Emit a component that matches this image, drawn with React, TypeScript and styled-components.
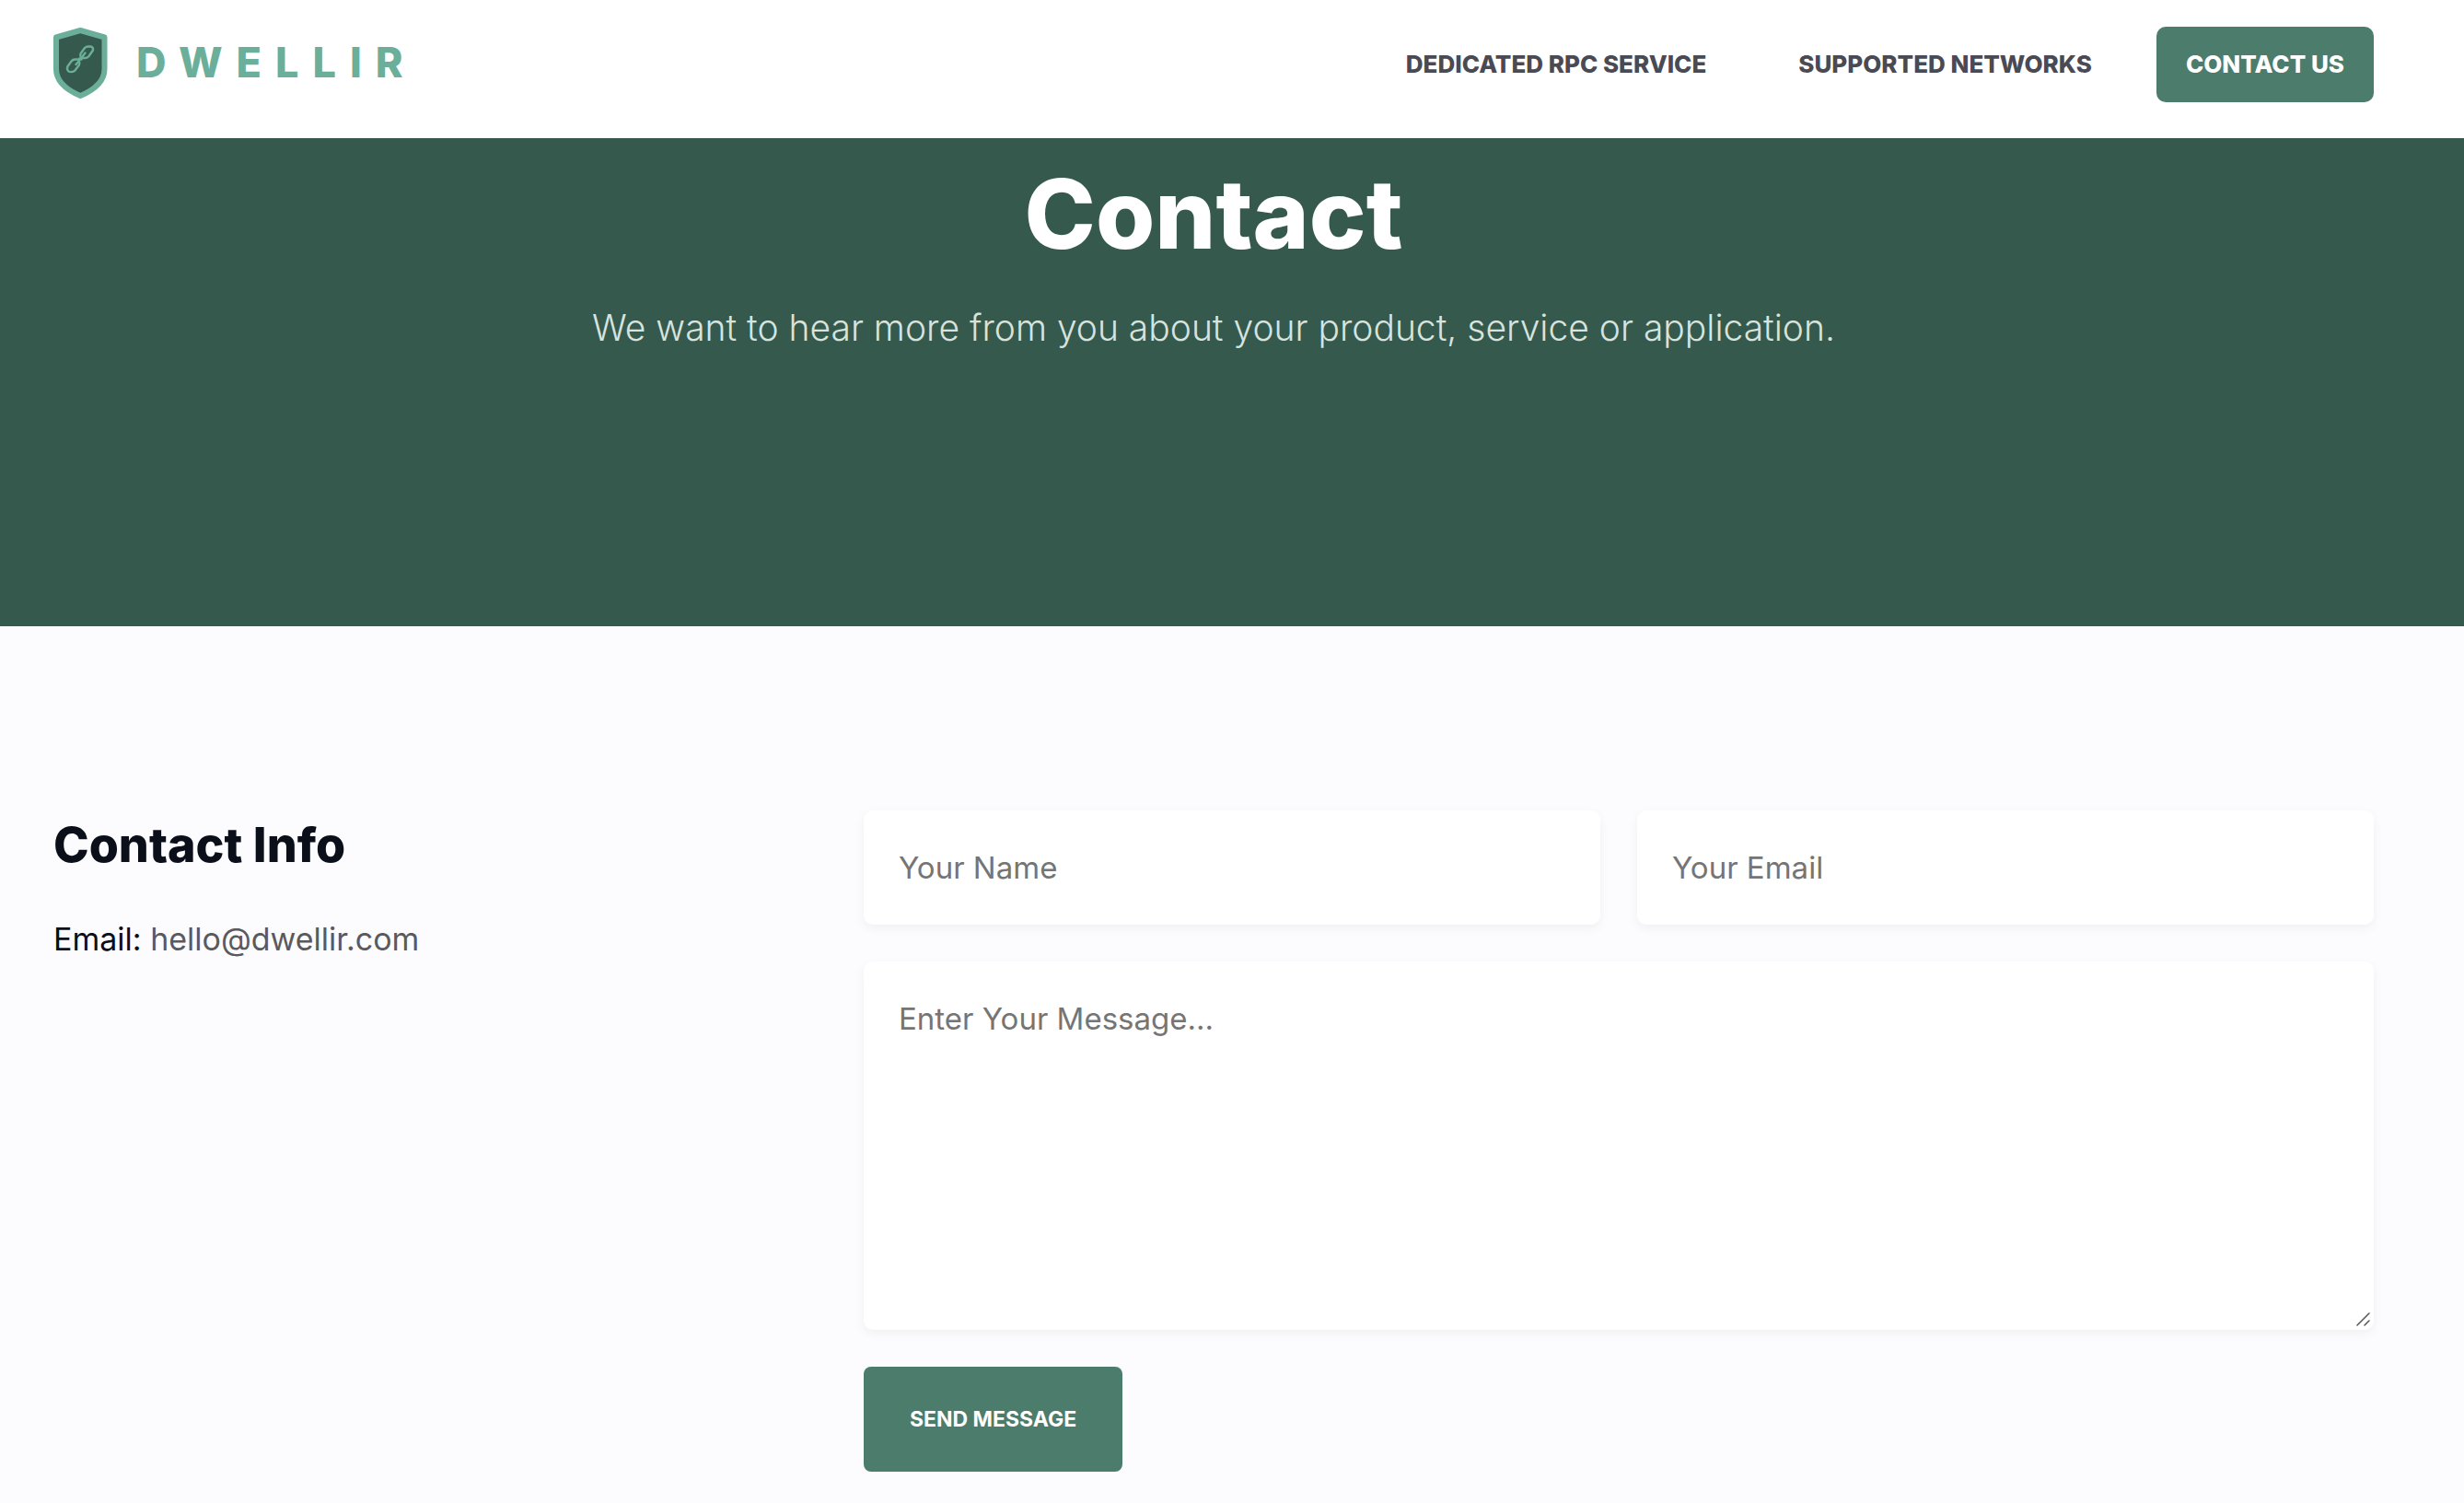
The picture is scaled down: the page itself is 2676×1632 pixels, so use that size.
import React from "react";
import styled, { createGlobalStyle } from "styled-components";

const GlobalStyle = createGlobalStyle`
  *, *::before, *::after { box-sizing: border-box; }
  body {
    margin: 0;
    background: #fcfcfe;
    color: #0b0f1a;
    font-family: Inter, "Open Sans", sans-serif;
    -webkit-font-smoothing: antialiased;
  }
`;

const Header = styled.header`
  display: flex;
  justify-content: space-between;
  align-items: flex-start;
  min-height: 150px;
  padding: 29px 98px 38px 58px;
  background: #fff;
`;

const Brand = styled.a`
  display: flex;
  align-items: flex-start;
  gap: 30px;
  color: #6baf9a;
  text-decoration: none;
`;

const Shield = styled.svg`
  width: 60px;
  height: 80px;
`;

const Wordmark = styled.span`
  font-size: 45px;
  font-weight: 800;
  line-height: 78px;
  letter-spacing: 15px;
`;

const Nav = styled.nav`
  display: flex;
  align-items: center;
  gap: 100px;
`;

const NavLink = styled.a`
  color: #4a4a55;
  font-size: 26px;
  font-weight: 800;
  line-height: 82px;
  text-decoration: none;
`;

const NavButton = styled(NavLink)`
  margin-left: -30px;
  padding: 0 32px;
  border-radius: 10px;
  background: #4c7c6b;
  color: #fff;
`;

const Hero = styled.section`
  padding: 22px 98px 294px 58px;
  background: #35594c;
  text-align: center;
`;

const HeroTitle = styled.h1`
  margin: 0;
  color: #fff;
  font-size: 104px;
  font-weight: 800;
  line-height: 120px;
`;

const HeroText = styled.p`
  margin: 34px 0 0;
  color: #d7e3de;
  font-size: 39px;
  font-weight: 300;
  line-height: 60px;
`;

const Main = styled.main`
  display: flex;
  padding: 200px 98px 34px 58px;
`;

const Info = styled.section`
  flex: 0 0 calc(100% / 3);
`;

const InfoTitle = styled.h2`
  margin: 0 0 38px;
  font-size: 52px;
  font-weight: 800;
  line-height: 76px;
`;

const InfoLine = styled.p`
  margin: 0;
  font-size: 34px;
  line-height: 52px;
`;

const MailLink = styled.a`
  color: #5a5a5e;
  text-decoration: none;
`;

const Form = styled.form`
  display: grid;
  flex: 1;
  grid-template-columns: 1fr 1fr;
  gap: 40px;
  padding-left: 40px;
`;

const Field = styled.input`
  width: 100%;
  height: 124px;
  padding: 32px 34px;
  border: 4px solid #fff;
  border-radius: 10px;
  background: #fff;
  box-shadow: 0 4px 12px rgba(0, 0, 0, 0.05);
  color: #0b0f1a;
  font-family: inherit;
  font-size: 33px;
  line-height: 52px;
  outline: none;
  &::placeholder { color: #757575; opacity: 1; }
`;

const gripIcon =
  "data:image/svg+xml,%3Csvg xmlns='http://www.w3.org/2000/svg' width='15' height='15'%3E%3Cpath d='M1 14 14 1M9 14l5-5' stroke='%23555' stroke-width='1.5' stroke-linecap='round'/%3E%3C/svg%3E";

const Message = styled(Field).attrs({ as: "textarea" })`
  display: block;
  grid-column: 1 / -1;
  height: 400px;
  resize: both;
  &::-webkit-resizer { background: url("${gripIcon}") no-repeat; }
`;

const Submit = styled.button`
  justify-self: start;
  padding: 31px 50px;
  border: 0;
  border-radius: 8px;
  background: #4c7c6b;
  color: #fff;
  font-family: inherit;
  font-size: 23px;
  font-weight: 700;
  line-height: 52px;
`;

function ShieldLogo() {
  return (
    <Shield viewBox="0 0 60 80" aria-hidden="true">
      <path
        d="M29.3 4 L55.5 11.5 V46 C55.5 61 41 70 29.3 75 C17.5 70 3 61 3 46 V11.5 Z"
        fill="#35594c"
        stroke="#6baf9a"
        strokeWidth="6"
        strokeLinejoin="round"
      />
      <g fill="none" stroke="#6baf9a" strokeWidth="2.4" strokeLinecap="round" strokeLinejoin="round">
        <path d="M29.5 32.5 Q28.5 30.5 30 28.5 L34 23 Q35.5 21.5 38 21.5 H40 Q43.5 22 43 25.5 L38.5 32 Q37 34 34.5 34 H31.5" />
        <path d="M27.5 35.5 H23.5 Q21 35.5 19.5 37.5 L15.5 43 Q14 46 16.5 48.5 Q19.5 50 23 48 L28 41.5 Q29 39.5 28 38" />
        <path d="M34.5 28.5 L31 33 Q29.5 34 30.5 35.5 M24.5 41 L28 37 Q29 36 28.5 34.5" />
      </g>
    </Shield>
  );
}

export default function App() {
  return (
    <>
      <GlobalStyle />
      <Header>
        <Brand href="#">
          <ShieldLogo />
          <Wordmark>DWELLIR</Wordmark>
        </Brand>
        <Nav>
          <NavLink href="#rpc">DEDICATED RPC SERVICE</NavLink>
          <NavLink href="#networks">SUPPORTED NETWORKS</NavLink>
          <NavButton href="#contact">CONTACT US</NavButton>
        </Nav>
      </Header>
      <Hero>
        <HeroTitle>Contact</HeroTitle>
        <HeroText>We want to hear more from you about your product, service or application.</HeroText>
      </Hero>
      <Main id="contact">
        <Info>
          <InfoTitle>Contact Info</InfoTitle>
          <InfoLine>
            Email: <MailLink href="mailto:hello@dwellir.com">hello@dwellir.com</MailLink>
          </InfoLine>
        </Info>
        <Form onSubmit={(event: React.FormEvent) => event.preventDefault()}>
          <Field type="text" name="name" aria-label="Your Name" placeholder="Your Name" />
          <Field type="email" name="email" aria-label="Your Email" placeholder="Your Email" />
          <Message name="message" aria-label="Message" placeholder="Enter Your Message..." />
          <Submit type="submit">SEND MESSAGE</Submit>
        </Form>
      </Main>
    </>
  );
}
